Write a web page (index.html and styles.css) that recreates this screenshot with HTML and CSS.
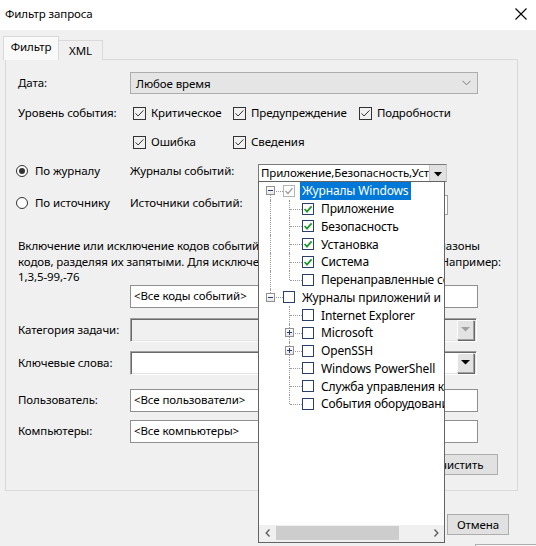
FILE: index.html
```html
<!DOCTYPE html>
<html lang="ru">
<head>
<meta charset="utf-8">
<title>Фильтр запроса</title>
<link rel="stylesheet" href="styles.css">
</head>
<body>
<div class="win">
  <div class="titlebar">
    <span class="title">Фильтр запроса</span>
    <svg class="close" width="12" height="12" viewBox="0 0 12 12"><path d="M0.5 0.5 L11.5 11.5 M11.5 0.5 L0.5 11.5" stroke="#000" stroke-width="1.1" fill="none"/></svg>
  </div>

  <div class="tabs">
    <div class="tab active">Фильтр</div>
    <div class="tab">XML</div>
  </div>

  <div class="panel">
    <div class="row r-date">
      <span class="lbl">Дата:</span>
      <div class="flatcombo">
        <span>Любое время</span>
        <svg width="9" height="6" viewBox="0 0 9 6"><path d="M0.5 0.8 L4.5 4.8 L8.5 0.8" stroke="#7a7a7a" fill="none"/></svg>
      </div>
    </div>

    <div class="row r-lvl1">
      <span class="lbl">Уровень события:</span>
      <label class="chk w100"><svg class="cb" width="13" height="13" viewBox="0 0 13 13"><rect x="0.5" y="0.5" width="12" height="12" fill="none" stroke="#333"/><path d="M2.6 6.4 L5.1 9 L10.4 3.4" stroke="#333" fill="none"/></svg>Критическое</label>
      <label class="chk w126"><svg class="cb" width="13" height="13" viewBox="0 0 13 13"><rect x="0.5" y="0.5" width="12" height="12" fill="none" stroke="#333"/><path d="M2.6 6.4 L5.1 9 L10.4 3.4" stroke="#333" fill="none"/></svg>Предупреждение</label>
      <label class="chk"><svg class="cb" width="13" height="13" viewBox="0 0 13 13"><rect x="0.5" y="0.5" width="12" height="12" fill="none" stroke="#333"/><path d="M2.6 6.4 L5.1 9 L10.4 3.4" stroke="#333" fill="none"/></svg>Подробности</label>
    </div>

    <div class="row r-lvl2">
      <span class="lbl"></span>
      <label class="chk w100"><svg class="cb" width="13" height="13" viewBox="0 0 13 13"><rect x="0.5" y="0.5" width="12" height="12" fill="none" stroke="#333"/><path d="M2.6 6.4 L5.1 9 L10.4 3.4" stroke="#333" fill="none"/></svg>Ошибка</label>
      <label class="chk"><svg class="cb" width="13" height="13" viewBox="0 0 13 13"><rect x="0.5" y="0.5" width="12" height="12" fill="none" stroke="#333"/><path d="M2.6 6.4 L5.1 9 L10.4 3.4" stroke="#333" fill="none"/></svg>Сведения</label>
    </div>

    <div class="row r-log">
      <label class="radio"><svg width="12" height="12" viewBox="0 0 12 12"><circle cx="6" cy="6" r="5.5" fill="#fff" stroke="#333"/><circle cx="6" cy="6" r="3" fill="#333"/></svg>По журналу</label>
      <span class="lbl2">Журналы событий:</span>
      <div class="logcombo">
        <span class="ltext">Приложение,Безопасность,Установка,Система</span>
        <span class="lbtn"><svg width="8" height="5" viewBox="0 0 8 5"><path d="M0 0 H8 L4 4.5 Z" fill="#000"/></svg></span>
      </div>
    </div>

    <div class="row r-src">
      <label class="radio"><svg width="12" height="12" viewBox="0 0 12 12"><circle cx="6" cy="6" r="5.5" fill="#fff" stroke="#333"/></svg>По источнику</label>
      <span class="lbl2">Источники событий:</span>
      <div class="srccombo"></div>
    </div>

    <div class="desc">
      <div class="dline l1"><span class="dl">Включение или исключение кодов событий: введите коды или</span><span class="dr">диапазоны</span></div>
      <div class="dline l2"><span class="dl">кодов, разделяя их запятыми. Для исключения введите минус.</span><span class="dr">Например:</span></div>
      <div class="dline">1,3,5-99,-76</div>
    </div>

    <div class="row r-codes">
      <span class="lbl"></span>
      <div class="input">&lt;Все коды событий&gt;</div>
    </div>

    <div class="row r-cat">
      <span class="lbl">Категория задачи:</span>
      <div class="sunken disabled">
        <span class="abtn"><svg width="9" height="5" viewBox="0 0 9 5"><path d="M0 0 H9 L4.5 4.5 Z" fill="#a0a0a0"/></svg></span>
      </div>
    </div>

    <div class="row r-kw">
      <span class="lbl">Ключевые слова:</span>
      <div class="sunken">
        <span class="abtn"><svg width="9" height="5" viewBox="0 0 9 5"><path d="M0 0 H9 L4.5 4.5 Z" fill="#000"/></svg></span>
      </div>
    </div>

    <div class="row r-user">
      <span class="lbl">Пользователь:</span>
      <div class="input">&lt;Все пользователи&gt;</div>
    </div>

    <div class="row r-comp">
      <span class="lbl">Компьютеры:</span>
      <div class="input">&lt;Все компьютеры&gt;</div>
    </div>

    <div class="row r-clear">
      <button class="btn clear">Очистить</button>
    </div>
  </div>

  <div class="footer">
    <button class="btn">ОК</button>
    <button class="btn">Отмена</button>
  </div>
  <div class="edge"></div>

  <div class="popup">
    <div class="tree">
      <div class="tr">
        <span class="tc root first"><span class="exp minus"></span></span>
        <span class="tcb gray"><svg width="12" height="12" viewBox="0 0 12 12"><rect x="0.5" y="0.5" width="11" height="11" fill="#fff" stroke="#b4b4b4"/><path d="M2.5 6 L5 8.5 L9.5 3.2" stroke="#9a9a9a" stroke-width="1.3" fill="none"/></svg></span>
        <span class="rt sel">Журналы Windows</span>
      </div>
      <div class="tr"><span class="tc v"></span><span class="tc t"></span><span class="tcb"><svg width="12" height="12" viewBox="0 0 12 12"><rect x="0.5" y="0.5" width="11" height="11" fill="#fff" stroke="#2b3f6b"/><path d="M2.6 6 L5 8.6 L9.6 3.4" stroke="#1f9a2a" stroke-width="1.8" fill="none"/></svg></span><span class="ct">Приложение</span></div>
      <div class="tr"><span class="tc v"></span><span class="tc t"></span><span class="tcb"><svg width="12" height="12" viewBox="0 0 12 12"><rect x="0.5" y="0.5" width="11" height="11" fill="#fff" stroke="#2b3f6b"/><path d="M2.6 6 L5 8.6 L9.6 3.4" stroke="#1f9a2a" stroke-width="1.8" fill="none"/></svg></span><span class="ct">Безопасность</span></div>
      <div class="tr"><span class="tc v"></span><span class="tc t"></span><span class="tcb"><svg width="12" height="12" viewBox="0 0 12 12"><rect x="0.5" y="0.5" width="11" height="11" fill="#fff" stroke="#2b3f6b"/><path d="M2.6 6 L5 8.6 L9.6 3.4" stroke="#1f9a2a" stroke-width="1.8" fill="none"/></svg></span><span class="ct">Установка</span></div>
      <div class="tr"><span class="tc v"></span><span class="tc t"></span><span class="tcb"><svg width="12" height="12" viewBox="0 0 12 12"><rect x="0.5" y="0.5" width="11" height="11" fill="#fff" stroke="#2b3f6b"/><path d="M2.6 6 L5 8.6 L9.6 3.4" stroke="#1f9a2a" stroke-width="1.8" fill="none"/></svg></span><span class="ct">Система</span></div>
      <div class="tr"><span class="tc v"></span><span class="tc l"></span><span class="tcb"><svg width="12" height="12" viewBox="0 0 12 12"><rect x="0.5" y="0.5" width="11" height="11" fill="#fff" stroke="#2b3f6b"/></svg></span><span class="ct">Перенаправленные события</span></div>
      <div class="tr">
        <span class="tc root last"><span class="exp minus"></span></span>
        <span class="tcb"><svg width="12" height="12" viewBox="0 0 12 12"><rect x="0.5" y="0.5" width="11" height="11" fill="#fff" stroke="#2b3f6b"/></svg></span>
        <span class="rt">Журналы приложений и служб</span>
      </div>
      <div class="tr"><span class="tc"></span><span class="tc t"></span><span class="tcb"><svg width="12" height="12" viewBox="0 0 12 12"><rect x="0.5" y="0.5" width="11" height="11" fill="#fff" stroke="#2b3f6b"/></svg></span><span class="ct">Internet Explorer</span></div>
      <div class="tr"><span class="tc"></span><span class="tc t"><span class="exp plus"></span></span><span class="tcb"><svg width="12" height="12" viewBox="0 0 12 12"><rect x="0.5" y="0.5" width="11" height="11" fill="#fff" stroke="#2b3f6b"/></svg></span><span class="ct">Microsoft</span></div>
      <div class="tr"><span class="tc"></span><span class="tc t"><span class="exp plus"></span></span><span class="tcb"><svg width="12" height="12" viewBox="0 0 12 12"><rect x="0.5" y="0.5" width="11" height="11" fill="#fff" stroke="#2b3f6b"/></svg></span><span class="ct">OpenSSH</span></div>
      <div class="tr"><span class="tc"></span><span class="tc t"></span><span class="tcb"><svg width="12" height="12" viewBox="0 0 12 12"><rect x="0.5" y="0.5" width="11" height="11" fill="#fff" stroke="#2b3f6b"/></svg></span><span class="ct">Windows PowerShell</span></div>
      <div class="tr"><span class="tc"></span><span class="tc t"></span><span class="tcb"><svg width="12" height="12" viewBox="0 0 12 12"><rect x="0.5" y="0.5" width="11" height="11" fill="#fff" stroke="#2b3f6b"/></svg></span><span class="ct">Служба управления ключами</span></div>
      <div class="tr"><span class="tc"></span><span class="tc l"></span><span class="tcb"><svg width="12" height="12" viewBox="0 0 12 12"><rect x="0.5" y="0.5" width="11" height="11" fill="#fff" stroke="#2b3f6b"/></svg></span><span class="ct">События оборудования</span></div>
    </div>
    <div class="hscroll">
      <span class="sarrow"><svg width="6" height="8" viewBox="0 0 6 8"><path d="M4.5 0.5 L1.2 4 L4.5 7.5" stroke="#606060" stroke-width="1.4" fill="none"/></svg></span>
      <span class="track"><span class="thumb"></span></span>
      <span class="sarrow"><svg width="6" height="8" viewBox="0 0 6 8"><path d="M1.5 0.5 L4.8 4 L1.5 7.5" stroke="#606060" stroke-width="1.4" fill="none"/></svg></span>
    </div>
  </div>
</div>
</body>
</html>
```

FILE: styles.css
```css
* { box-sizing: border-box; }
html, body { margin: 0; padding: 0; }
body {
  width: 536px;
  height: 546px;
  overflow: hidden;
  background: #f0f0f0;
  font-family: "Noto Sans", "DejaVu Sans", sans-serif;
  font-size: 11.5px;
  letter-spacing: -0.1px;
  color: #000;
}
.win { position: relative; width: 536px; height: 546px; }

.titlebar {
  height: 30px;
  background: #fff;
  display: flex;
  align-items: center;
  justify-content: space-between;
  padding: 0 9px 2px 5px;
}
.title { line-height: 16px; }
.close { display: block; }

.tabs {
  display: flex;
  align-items: flex-end;
  height: 24px;
  margin-top: 6px;
  padding-left: 3px;
  position: relative;
  z-index: 2;
}
.tab {
  height: 20px;
  width: 44px;
  border: 1px solid #d9d9d9;
  border-left: none;
  border-bottom: none;
  background: #f0f0f0;
  display: flex;
  align-items: center;
  justify-content: center;
  line-height: 14px;
  padding-top: 1px;
}
.tab.active {
  height: 24px;
  width: 56px;
  border-left: 1px solid #d9d9d9;
  background: #f9f9f9;
  padding-top: 0;
  padding-bottom: 4px;
}

.panel {
  margin-left: 5px;
  margin-top: -1px;
  width: 513px;
  height: 432px;
  border: 1px solid #d9d9d9;
  background: #f0f0f0;
  padding: 0 0 0 12px;
  display: flex;
  flex-direction: column;
}

.row { display: flex; align-items: center; flex: none; }
.lbl { width: 112px; flex: none; line-height: 16px; }
.lbl2 { width: 128px; flex: none; line-height: 14px; }

.r-date { margin-top: 12px; height: 22px; }
.flatcombo {
  width: 348px;
  height: 22px;
  background: #e5e5e5;
  border: 1px solid #adadad;
  display: flex;
  align-items: center;
  justify-content: space-between;
  padding: 0 6px 0 5px;
}

.r-lvl1 { margin-top: 10px; height: 18px; }
.r-lvl2 { margin-top: 11px; height: 18px; }
.chk { display: flex; align-items: center; line-height: 16px; }
.chk .cb { margin: 0 5px 0 3px; flex: none; }
.w100 { width: 100px; }
.w126 { width: 126px; }

.r-log { margin-top: 13px; height: 18px; align-items: flex-start; }
.r-src { margin-top: 13px; height: 20px; align-items: flex-start; }
.radio {
  width: 114px;
  margin-left: -2px;
  display: flex;
  align-items: center;
  line-height: 14px;
  flex: none;
}
.r-src .radio, .r-src .lbl2 { margin-top: 1px; }
.radio svg { margin-right: 7px; flex: none; }
.logcombo {
  width: 189px;
  height: 18px;
  border: 1px solid #7a7a7a;
  border-right-color: #c8c8c8;
  background: #fff;
  display: flex;
  align-items: stretch;
}
.ltext {
  flex: 1;
  min-width: 0;
  overflow: hidden;
  white-space: nowrap;
  line-height: 16px;
  padding-left: 2px;
}
.lbtn {
  width: 17px;
  flex: none;
  background: #e1e1e1;
  border-left: 1px solid #c8c8c8;
  display: flex;
  align-items: center;
  justify-content: center;
  padding-top: 2px;
}
.srccombo {
  width: 190px;
  height: 20px;
  border: 1px solid #a0a0a0;
  background: #fff;
}

.desc { margin-top: 23px; flex: none; }
.dline { line-height: 15.5px; white-space: nowrap; }
.l1, .l2 { display: flex; }
.l1 { width: 462px; }
.l2 { width: 483px; }
.dl { flex: 1; min-width: 0; overflow: hidden; }
.dr { flex: none; padding-left: 4px; }

.input {
  width: 348px;
  height: 23px;
  border: 1px solid #8f8f8f;
  background: #fff;
  line-height: 20px;
  padding-left: 3px;
  white-space: nowrap;
}
.r-codes { margin-top: 0; height: 23px; }
.r-cat { margin-top: 10px; height: 24px; }
.r-kw { margin-top: 9px; height: 24px; }
.r-user { margin-top: 14px; height: 23px; }
.r-comp { margin-top: 8px; height: 23px; }

.sunken {
  width: 347px;
  height: 24px;
  background: #fff;
  border-top: 1px solid #a0a0a0;
  border-left: 1px solid #a0a0a0;
  border-right: 1px solid #fff;
  border-bottom: 1px solid #fff;
  box-shadow: inset 1px 1px 0 #696969, inset -1px -1px 0 #e3e3e3;
  display: flex;
  justify-content: flex-end;
  align-items: center;
  padding-right: 2px;
}
.sunken.disabled { background: #f0f0f0; }
.abtn {
  width: 17px;
  height: 20px;
  background: #e3e3e3;
  border: 1px solid #fff;
  border-right-color: #a0a0a0;
  border-bottom-color: #a0a0a0;
  box-shadow: 1px 1px 0 #696969;
  display: flex;
  align-items: center;
  justify-content: center;
}

.r-clear { margin-top: 11px; height: 21px; justify-content: flex-end; padding-right: 19px; }
.btn {
  font-family: inherit;
  font-size: 11.5px;
  letter-spacing: -0.1px;
  color: #000;
  background: #e1e1e1;
  border: 1px solid #adadad;
  border-radius: 0;
  padding: 0;
  line-height: 17px;
  margin: 0;
}
.clear { width: 81px; height: 21px; }

.footer {
  display: flex;
  justify-content: flex-end;
  gap: 16px;
  padding-right: 27px;
  margin-top: 23px;
}
.footer .btn { width: 62px; height: 21px; }
.edge {
  margin: 9px 0 0 475px;
  height: 3px;
  border-top: 1px solid #adadad;
  border-left: 1px solid #adadad;
  background: #f7f7f7;
}

/* dropdown overlay */
.popup {
  position: absolute;
  left: 258px;
  top: 181px;
  width: 187px;
  height: 362px;
  background: #fff;
  border: 1px solid #646464;
  display: flex;
  flex-direction: column;
  z-index: 5;
}
.tree { flex: 1; overflow: hidden; padding-left: 2px; font-size: 12px; letter-spacing: -0.15px; }
.tr {
  display: flex;
  align-items: center;
  height: 17.75px;
  white-space: nowrap;
}
.tc {
  width: 19px;
  height: 100%;
  flex: none;
  position: relative;
}
.tc.v::before, .tc.t::before, .tc.l::before, .tc.root::before {
  content: "";
  position: absolute;
  left: 9px;
  top: 0;
  bottom: 0;
  border-left: 1px dotted #9a9a9a;
}
.tc.l::before { bottom: 50%; }
.tc.root.first::before { top: 50%; }
.tc.root.last::before { bottom: 50%; }
.tc.t::after, .tc.l::after, .tc.root::after {
  content: "";
  position: absolute;
  left: 10px;
  right: -3px;
  top: 50%;
  border-top: 1px dotted #9a9a9a;
}
.exp {
  position: absolute;
  left: 5px;
  top: 50%;
  margin-top: -4.5px;
  width: 9px;
  height: 9px;
  border: 1px solid #919191;
  background: linear-gradient(#fff, #e6e6e6);
  z-index: 1;
}
.exp::before {
  content: "";
  position: absolute;
  left: 1px;
  top: 3px;
  width: 5px;
  height: 1px;
  background: #2a3d6e;
}
.exp.plus::after {
  content: "";
  position: absolute;
  left: 3px;
  top: 1px;
  width: 1px;
  height: 5px;
  background: #2a3d6e;
}
.tcb { width: 12px; height: 12px; margin-left: 3px; flex: none; display: flex; position: relative; z-index: 1; }
.rt {
  margin-left: 5px;
  padding: 0 2px;
  height: 100%;
  display: flex;
  align-items: center;
}
.rt.sel { background: #0078d7; color: #fff; padding-right: 3px; }
.ct { margin-left: 7px; }

.hscroll {
  height: 17px;
  flex: none;
  display: flex;
  background: #f0f0f0;
  padding: 1px 0 2px;
}
.sarrow {
  width: 17px;
  flex: none;
  display: flex;
  align-items: center;
  justify-content: center;
}
.track { flex: 1; display: flex; align-items: stretch; background: #f0f0f0; }
.thumb { width: 123px; background: #cdcdcd; }
```
